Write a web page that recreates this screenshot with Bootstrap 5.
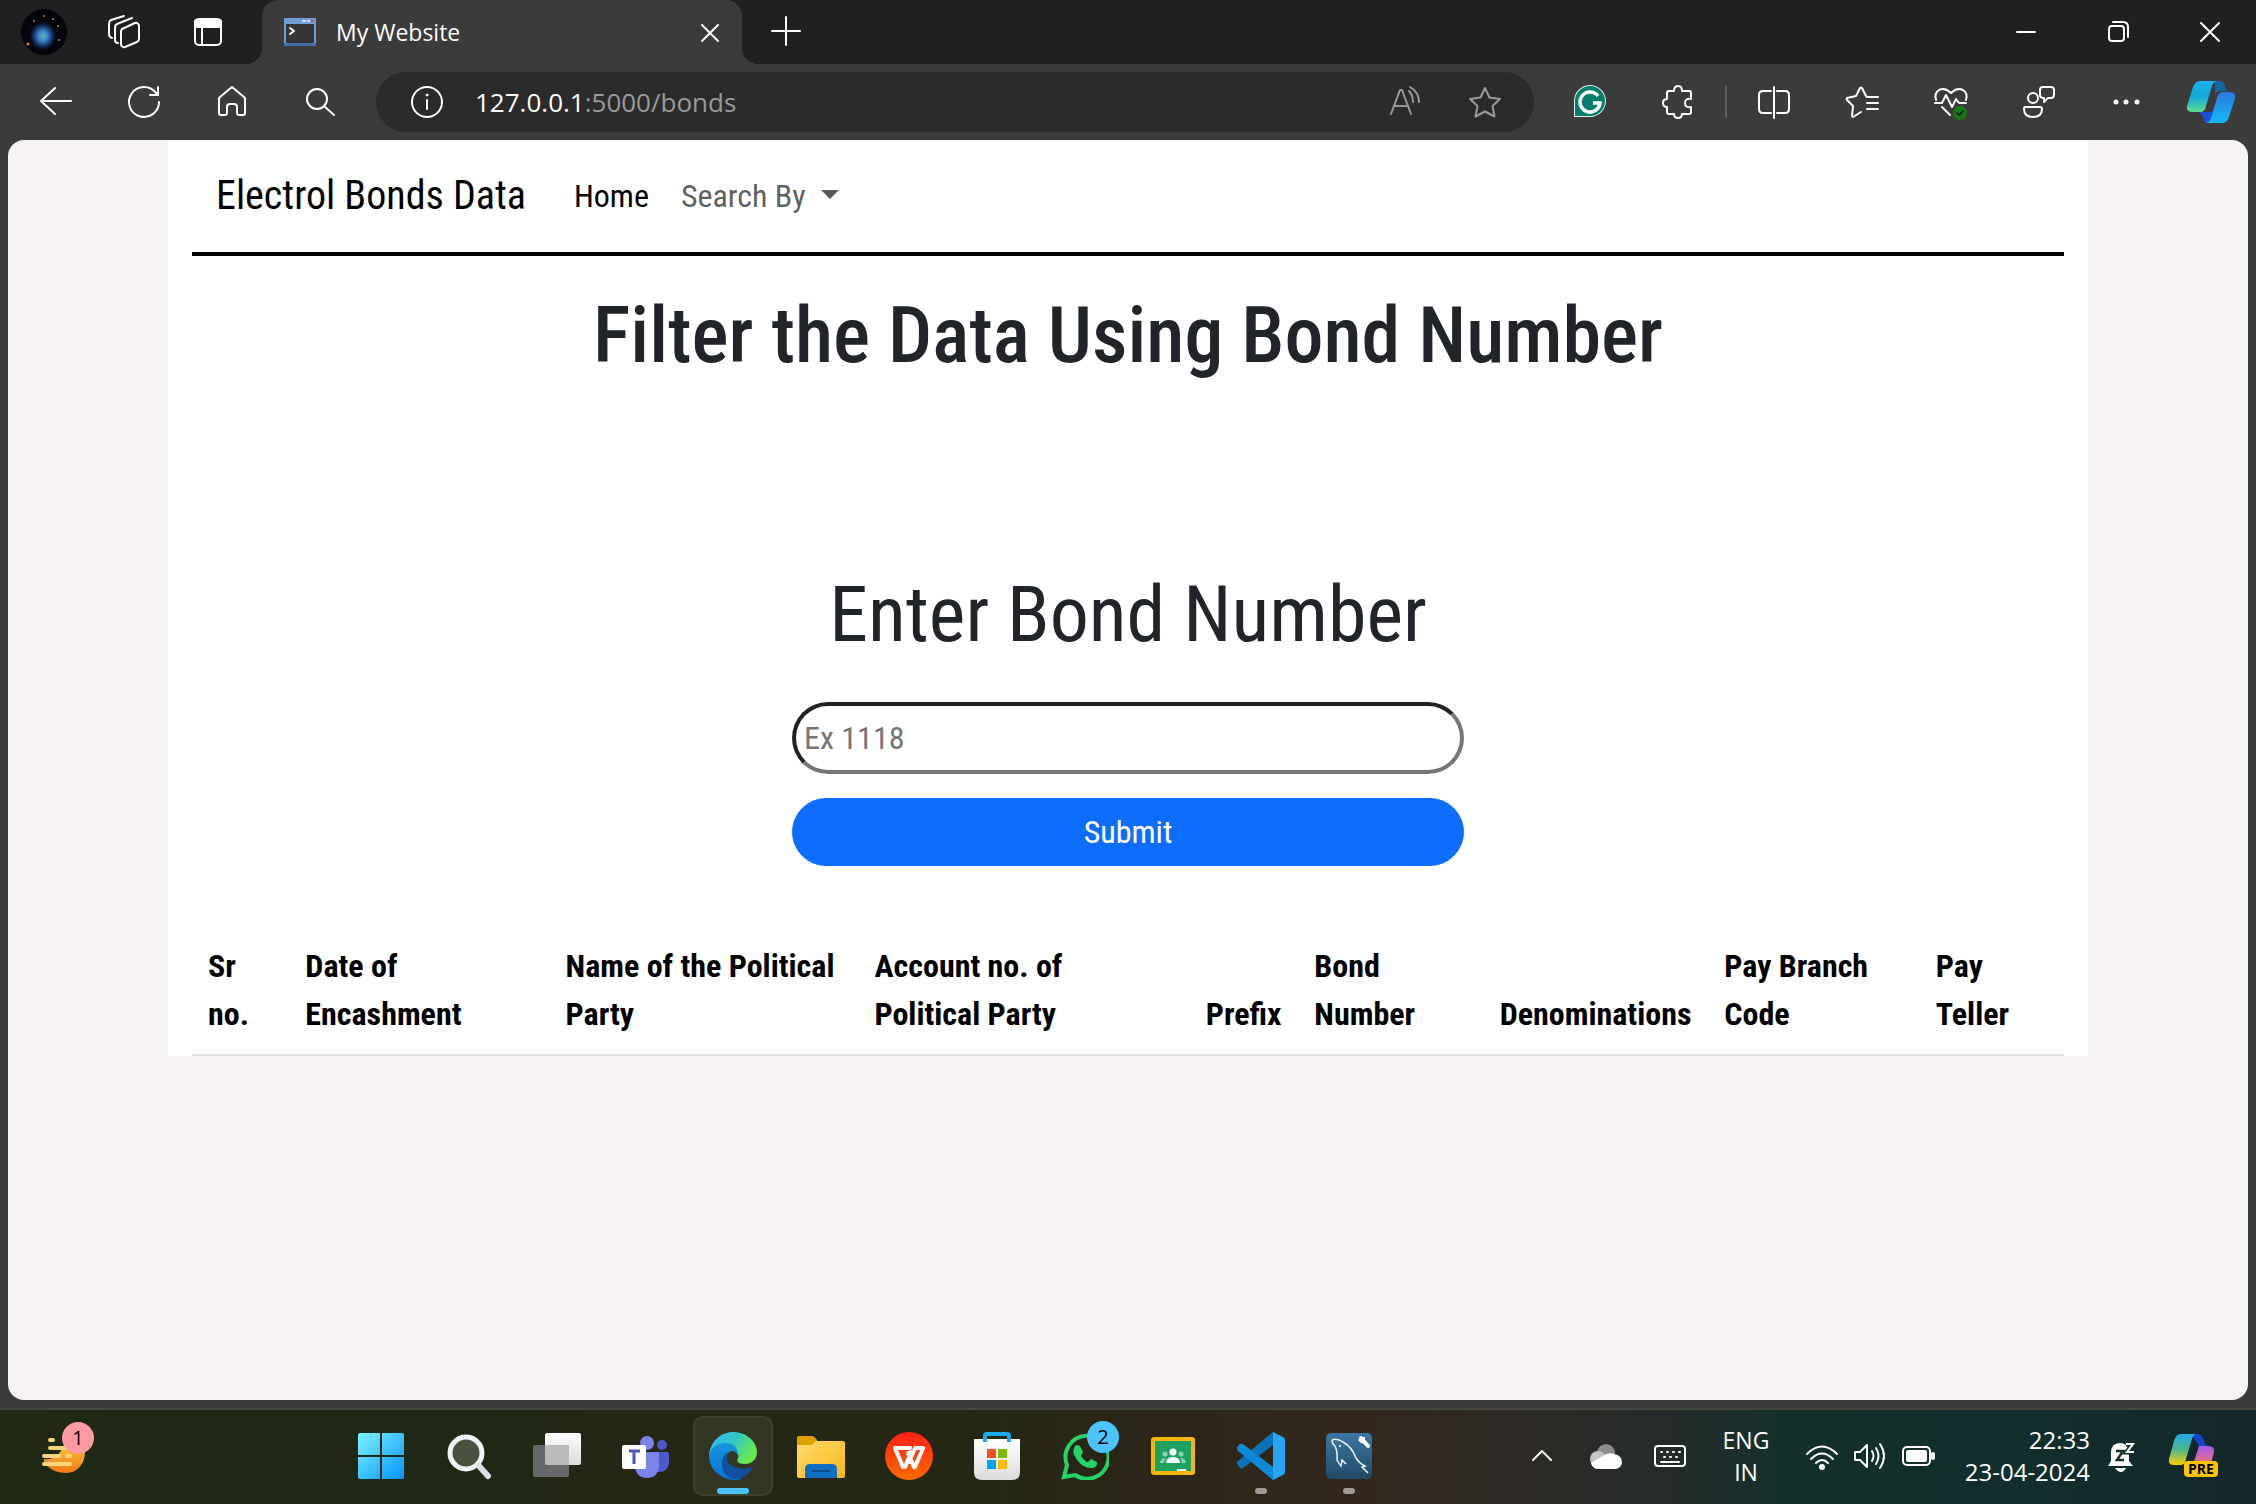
<!DOCTYPE html>
<html lang="en">
<head>
<meta charset="utf-8">
<meta name="viewport" content="width=device-width, initial-scale=1">
<title>My Website</title>
<link href="https://cdn.jsdelivr.net/npm/bootstrap@5.3.0/dist/css/bootstrap.min.css" rel="stylesheet">
<style>
body{background:#3b3b3b;font-family:"Open Sans","Noto Sans",sans-serif;font-size:24px;color:#fff;overflow:hidden}
svg{display:block;flex:none}
.ln{fill:none;stroke:#fff;stroke-width:2;stroke-linecap:round;stroke-linejoin:round}
.dim{stroke:#9a9a9a}
.ib{background:none;border:0;padding:0;color:inherit;display:flex;align-items:center;justify-content:center;flex:none;width:88px;position:relative;text-decoration:none}
.w80{width:80px}.w60{width:60px}.w48{width:48px}.w64{width:64px}.w92{width:92px}.w79{width:79px}.w82{width:82px}.w84{width:84px}.w160{width:160px}
.titlebar{height:64px;background:#202020;padding-left:4px}
.tab{width:480px;background:#3b3b3b;border-radius:16px 16px 0 0;margin-left:10px;padding:0 8px 0 14px;position:relative;font-size:23px;gap:12px}
.tab::before,.tab::after{content:"";position:absolute;bottom:0;width:16px;height:16px}
.tab::before{left:-16px;background:radial-gradient(circle at 0 0,#202020 16px,#3b3b3b 16px)}
.tab::after{right:-16px;background:radial-gradient(circle at 100% 0,#202020 16px,#3b3b3b 16px)}
.toolbar{height:76px;padding:8px 4px 8px 12px}
.address{background:#2b2b2b;border-radius:30px;padding:0 25px 0 27px;margin:0 12px;font-size:26px}
.addr-path{color:#9a9a9a}
.vr-line{width:2px;height:32px;background:#5e5e5e;margin:0 3px}
.viewport-area{background:#f7f3f2;border-radius:16px;margin:0 8px 8px;color:#212529;font-family:"Roboto Condensed",Roboto,sans-serif;font-size:32px;overflow:hidden}
.site{background:#fff;max-width:1920px;padding:0 24px}
.site-nav{border-bottom:4px solid #000;padding:16px 8px}
.site-nav .container-fluid{padding:0 16px}
.site-nav .navbar-brand{font-size:40px;line-height:60px;padding:10px 0;margin-right:32px}
.site-nav .nav-link{padding:16px!important}
.site-title{font-size:78px;line-height:96px;margin:32px 0 0;font-weight:500}
.bond-form{width:672px;max-width:100%;margin:171px auto 60px}
.bond-form label{font-size:78px;line-height:120px;margin-bottom:27px}
.bond-form input{height:72px;border:4px solid;border-color:#212121 #767676 #767676 #212121;border-radius:36px;padding:0 8px;margin-bottom:24px;outline:0}
.bond-form input::placeholder{color:#757575}
.bond-form .btn{height:68px;border-radius:34px;font-size:32px;padding:0}
.bond-table{table-layout:fixed;--bs-table-bg:transparent}
.bond-table th{padding:16px;border-bottom:2px solid #dee2e6;color:#000;line-height:48px;vertical-align:bottom}
.taskbar{height:96px;padding-bottom:2px;border-top:2px solid #43463c;background:linear-gradient(90deg,#1f2914 0,#1f2814 22%,#252714 28%,#242713 42%,#2c2618 52%,#33271c 60%,#2e2a26 67%,#252c2b 74%,#14302b 79%,#122e2d 90%,#13272a 100%)}
.widgets{height:64px;margin:0 229px 0 20px}
.tile{height:80px;width:80px;margin:0 4px;border-radius:10px}
.tile-on{background:rgba(255,255,255,.07);border:2px solid rgba(255,255,255,.05)}
.pill{position:absolute;bottom:2px;width:12px;height:6px;border-radius:3px;background:#a09a94}
.tile-on .pill{width:32px;background:#4cc2ff;bottom:0}
.count{position:absolute;width:32px;height:32px;border-radius:16px;color:#000;font-size:20px;line-height:32px;text-align:center}
.count-pink{background:#ff99a4;top:-2px;left:42px}
.count-blue{background:#4cc2ff;top:5px;left:42px}
.lang{font-size:23px;line-height:32px;width:80px;text-align:center}
.clock{line-height:32px;text-align:right;width:144px}
.copilot-pre{width:84px;height:64px;margin-right:22px}
.pre{position:absolute;left:34px;top:37px;background:#ffc300;color:#000;font-size:14px;line-height:16px;font-weight:700;border-radius:4px;padding:0 4px}
</style>
</head>
<body class="d-flex flex-column vh-100">
<svg width="0" height="0" class="position-absolute"><defs>
<radialGradient id="neb"><stop offset="0" stop-color="#55b9a8"/><stop offset=".3" stop-color="#3f86cf"/><stop offset=".6" stop-color="#173a72"/><stop offset="1" stop-color="#04060c" stop-opacity="0"/></radialGradient>
<linearGradient id="cA" x1="0" y1="0" x2="0" y2="1"><stop offset="0" stop-color="#1bb3f0"/><stop offset=".5" stop-color="#0fa9d8"/><stop offset="1" stop-color="#5fdc90"/></linearGradient>
<linearGradient id="cB" x1="0" y1="0" x2="0" y2="1"><stop offset="0" stop-color="#2a78e0"/><stop offset="1" stop-color="#17b8f5"/></linearGradient>
<linearGradient id="cC" x1="0" y1="0" x2="0" y2="1"><stop offset="0" stop-color="#22a9ee"/><stop offset=".5" stop-color="#4cb58a"/><stop offset="1" stop-color="#ffd000"/></linearGradient>
<linearGradient id="cD" x1="0" y1="0" x2="0" y2="1"><stop offset="0" stop-color="#a35cf0"/><stop offset="1" stop-color="#ff7557"/></linearGradient>
<linearGradient id="win" x1="0" y1="0" x2="1" y2="1"><stop offset="0" stop-color="#7cf3ff"/><stop offset="1" stop-color="#0794ff"/></linearGradient>
<linearGradient id="eTop" x1="0" y1="0" x2="1" y2=".5"><stop offset="0" stop-color="#36b5f5"/><stop offset=".5" stop-color="#2fc6c8"/><stop offset="1" stop-color="#6be84e"/></linearGradient>
<linearGradient id="eL" x1="0" y1="0" x2="0" y2="1"><stop offset="0" stop-color="#1a93dc"/><stop offset="1" stop-color="#0573d4"/></linearGradient>
<linearGradient id="fold" x1="0" y1="0" x2="1" y2="1"><stop offset="0" stop-color="#ffdc70"/><stop offset="1" stop-color="#f9b713"/></linearGradient>
<linearGradient id="wps" x1="0" y1="0" x2="0" y2="1"><stop offset="0" stop-color="#ff1f1a"/><stop offset="1" stop-color="#ff6a00"/></linearGradient>
<linearGradient id="wh" x1="0" y1="0" x2="0" y2="1"><stop offset="0" stop-color="#fff"/><stop offset="1" stop-color="#dcdcdc"/></linearGradient>
<linearGradient id="my" x1="0" y1="0" x2="0" y2="1"><stop offset="0" stop-color="#3b78a5"/><stop offset="1" stop-color="#204a66"/></linearGradient>
<linearGradient id="food" x1="0" y1="0" x2="0" y2="1"><stop offset="0" stop-color="#f8c83c"/><stop offset="1" stop-color="#f07a14"/></linearGradient>
</defs></svg>

<header class="titlebar d-flex">
  <button class="ib w80" aria-label="Profile"><svg width="48" height="48"><circle cx="24" cy="24" r="23" fill="#04060c"/><ellipse cx="23" cy="28" rx="15" ry="16" fill="url(#neb)"/><g fill="#c8794a"><circle cx="14" cy="13" r="1"/><circle cx="33" cy="11" r="1"/><circle cx="38" cy="18" r="1"/><circle cx="8" cy="36" r="1.5"/><circle cx="24" cy="8" r="1"/><circle cx="39" cy="32" r="1"/></g></svg></button>
  <button class="ib w80" aria-label="Workspaces"><svg width="48" height="48" class="ln"><path d="M22 21l13-6a3 3 0 0 1 4 3v13q0 2-2 3l-12 5a3 3 0 0 1-4-3V24q0-2 1-3zM18 35q-3 0-3-3V20q0-3 2-4l15-6M12 30q-3-1-3-4V16q0-3 2-4l13-4"/></svg></button>
  <button class="ib" aria-label="Tab actions"><svg width="48" height="48" class="ln"><rect x="11" y="12" width="26" height="25" rx="4"/><path d="M11 13q1-2 4-2h18q3 0 4 2v6H11z" fill="#fff"/><path d="M18 19v18"/></svg></button>
  <div class="tab d-flex align-items-center">
    <svg width="48" height="48"><path d="M8 10h32v28H8z" fill="#6f9edb"/><path d="M8 35h32v3H8z" fill="#466fae"/><path d="M10 16h28v19H10z" fill="#353535"/><path d="M26 12h4v2h-4zM31 12h3v2h-3z" fill="#d6dfec"/><path d="M35 12h3v2h-3z" fill="#e5533f"/><path d="M14 20l4 3-4 3" class="ln"/></svg>
    <span>My Website</span>
    <button class="ib w48 ms-auto" aria-label="Close tab"><svg width="48" height="48" class="ln"><path d="M16 17l16 16M32 17L16 33"/></svg></button>
  </div>
  <button class="ib" aria-label="New tab"><svg width="48" height="48" class="ln"><path d="M10 23h28M24 9v28"/></svg></button>
  <div class="ms-auto d-flex">
    <button class="ib w92" aria-label="Minimize"><svg width="48" height="48" class="ln"><path d="M15 24h18"/></svg></button>
    <button class="ib w92" aria-label="Restore"><svg width="48" height="48" class="ln"><rect x="15" y="18" width="15" height="15" rx="3"/><path d="M19 14h10q5 0 5 5v10"/></svg></button>
    <button class="ib w92" aria-label="Close"><svg width="48" height="48" class="ln"><path d="M15 15l18 18M33 15L15 33"/></svg></button>
  </div>
</header>

<div class="toolbar d-flex">
  <button class="ib" aria-label="Back"><svg width="48" height="48" class="ln"><path d="M23 10L9 23l14 13M9 23h30"/></svg></button>
  <button class="ib" aria-label="Refresh"><svg width="48" height="48" class="ln"><path d="M39 24a15 15 0 1 1-3-9l2 2M38 9v8h-8"/></svg></button>
  <button class="ib" aria-label="Home"><svg width="48" height="48" class="ln"><path d="M24 9l12 10q1 1 1 2v14q0 2-2 2h-4q-2 0-2-2v-6q0-3-3-3h-4q-3 0-3 3v6q0 2-2 2h-4q-2 0-2-2V21q0-1 1-2z"/></svg></button>
  <button class="ib" aria-label="Search"><svg width="48" height="48" class="ln"><circle cx="21" cy="21" r="10"/><path d="M28 28l10 9"/></svg></button>
  <div class="address d-flex align-items-center flex-grow-1">
    <svg width="48" height="48" class="ln"><circle cx="24" cy="24" r="15"/><path d="M24 22v9"/><circle cx="24" cy="17" r="1" fill="#fff" stroke-width="1"/></svg>
    <span class="ms-4">127.0.0.1<span class="addr-path">:5000/bonds</span></span>
    <div class="d-flex ms-auto">
      <button class="ib w79" aria-label="Read aloud"><svg width="48" height="48" class="ln dim"><path d="M9 36l9-24h2l9 24M13 28h12M27 13q4 4 4 11M28 9q9 5 9 15"/></svg></button>
      <button class="ib w48 ms-3" aria-label="Favorite"><svg width="48" height="48" class="ln dim"><path d="M24 10l4.500 9.500 10.500 1.500-7.500 7 2 10.500-9.500-5-9.500 5 2-10.500-7.500-7 10.500-1.500z"/></svg></button>
    </div>
  </div>
  <button class="ib" aria-label="Grammarly"><svg width="48" height="48"><path d="M8 39V24a16 16 0 1 1 16 15z" fill="#d9f3ee"/><path d="M9 38V24a15 15 0 1 1 15 14z" fill="#087d6c"/><path d="M32 18a10 10 0 1 0 2 7h-7" fill="none" stroke="#fff" stroke-width="3.500"/></svg></button>
  <button class="ib" aria-label="Extensions"><svg width="48" height="48" class="ln"><path d="M15 13h5q0-5 4-5t4 5h7q2 0 2 2v6q-6-1-6 4t6 4v5q0 2-2 2h-7q0 4-4 4t-4-4h-5q-2 0-2-2v-5q-4 0-4-4t4-4v-6q0-2 2-2z"/></svg></button>
  <span class="vr-line align-self-center"></span>
  <button class="ib" aria-label="Split screen"><svg width="48" height="48" class="ln"><path d="M21 13h-8q-4 0-4 4v14q0 4 4 4h8M27 13h8q4 0 4 4v14q0 4-4 4h-8M24 9v31"/></svg></button>
  <button class="ib" aria-label="Favorites"><svg width="48" height="48" class="ln"><path d="M29 19l-1-1-4-8q-1-1-2 0l-4 8-9 2q-1 1 0 2l6 6-1 10q0 1 1 1l8-5M30 19h10M29 25h11M29 31h11"/></svg></button>
  <button class="ib" aria-label="Browser essentials"><svg width="48" height="48" class="ln"><path d="M10 22q-2-7 3-10 6-3 12 3 6-6 12-3 5 3 3 10M9 25h7l4-8 6 12 4-8 3 4h7M16 29l8 8"/><circle cx="34" cy="35" r="7" fill="#107c10" stroke="none"/><path d="M31 35l2 2 4-4" stroke="#222"/></svg></button>
  <button class="ib" aria-label="Feedback"><svg width="48" height="48" class="ln"><circle cx="19" cy="20" r="5"/><path d="M11 29h15q2 0 2 2 0 8-9 8t-9-8q0-2 1-2zM29 9h8q3 0 3 3v5q0 3-3 3h-3l-4 4v-4q-4 0-4-3v-5q0-3 3-3z"/></svg></button>
  <button class="ib" aria-label="More"><svg width="48" height="48" fill="#fff"><circle cx="14" cy="24" r="2.500"/><circle cx="24" cy="24" r="2.500"/><circle cx="35" cy="24" r="2.500"/></svg></button>
  <button class="ib w82" aria-label="Copilot"><svg width="48" height="48"><path d="M28 3h4q5 0 6 5 1 5 4 5h-9q-4 0-5 4z" fill="#0d6ba0"/><path d="M21 45q-4 0-5-5-1-6-6-6h12q5 0 5-5l4-6-6 22z" fill="#1c50dc"/><path d="M13 3h17q-4 1-5 5l-6 20q-1 6-6 6H5q-6 0-5-6L6 9q2-6 7-6z" fill="url(#cA)"/><path d="M35 45H19q4-1 5-5l6-20q1-6 6-6h7q6 0 5 6l-6 19q-2 6-7 6z" fill="url(#cB)"/></svg></button>
</div>

<main class="viewport-area flex-grow-1">
  <div class="site mx-auto">
    <nav class="site-nav navbar navbar-expand navbar-light">
      <div class="container-fluid">
        <a class="navbar-brand text-black" href="#">Electrol Bonds Data</a>
        <ul class="navbar-nav me-auto">
          <li class="nav-item"><a class="nav-link text-black" href="#">Home</a></li>
          <li class="nav-item dropdown"><a class="nav-link dropdown-toggle" href="#" role="button" data-bs-toggle="dropdown">Search By </a></li>
        </ul>
      </div>
    </nav>
    <h1 class="site-title text-center">Filter the Data Using Bond Number</h1>
    <form class="bond-form d-flex flex-column">
      <label for="bond" class="text-center">Enter Bond Number</label>
      <input id="bond" type="text" placeholder="Ex 1118">
      <button type="button" class="btn btn-primary">Submit</button>
    </form>
    <table class="bond-table table mb-0">
      <colgroup><col style="width:5.2%"><col style="width:13.9%"><col style="width:16.5%"><col style="width:17.7%"><col style="width:5.8%"><col style="width:9.9%"><col style="width:12%"><col style="width:11.3%"><col style="width:7.7%"></colgroup>
      <thead><tr>
        <th scope="col">Sr no.</th><th scope="col">Date of Encashment</th><th scope="col">Name of the Political Party</th><th scope="col">Account no. of Political Party</th><th scope="col">Prefix</th><th scope="col">Bond Number</th><th scope="col">Denominations</th><th scope="col">Pay Branch Code</th><th scope="col">Pay Teller</th>
      </tr></thead>
    </table>
  </div>
</main>

<footer class="taskbar d-flex align-items-center">
  <button class="ib widgets" aria-label="Widgets"><svg width="56" height="56"><path d="M8 31q14 2 21-16l18 0q4 9 0 19-6 11-16 11Q14 45 8 33z" fill="url(#food)"/><g stroke="#f6d67c" stroke-width="4" stroke-linecap="round"><path d="M14 12h3M14 20h20M8 28h15M31 28h3M8 36h26"/></g></svg><span class="count count-pink">1</span></button>
  <button class="ib tile" aria-label="Start"><svg width="48" height="48" fill="url(#win)"><path d="M1 3q0-2 2-2h20v22H1zM25 1h20q2 0 2 2v20H25zM1 25h22v22H3q-2 0-2-2zM25 25h22v20q0 2-2 2H25z"/></svg></button>
  <button class="ib tile" aria-label="Search"><svg width="48" height="48"><circle cx="21" cy="21" r="16" fill="#4b513f" stroke="#f1f3f6" stroke-width="5"/><path d="M34 34l9 10" stroke="#dcdfe6" stroke-width="6" stroke-linecap="round"/></svg></button>
  <button class="ib tile" aria-label="Task view"><svg width="48" height="48"><rect x="12" y="1" width="36" height="32" rx="2" fill="url(#wh)"/><rect y="13" width="36" height="32" rx="2" fill="#66686a"/><path d="M12 13h24v20H14q-2 0-2-2z" fill="#bbb"/></svg></button>
  <button class="ib tile" aria-label="Teams"><svg width="48" height="48"><circle cx="41" cy="13" r="5" fill="#5059c9"/><path d="M34 20h12q2 0 2 2v9q-1 9-10 9h-4z" fill="#5059c9"/><circle cx="26" cy="11" r="7" fill="#7b83eb"/><path d="M15 20h21q2 0 2 2v12q-1 12-12 12T14 34z" fill="#7b83eb"/><rect x="1" y="13" width="24" height="24" rx="2" fill="#fff"/><path d="M8 19h11M13 19v13" stroke="#4b53bc" stroke-width="3"/></svg></button>
  <button class="ib tile tile-on" aria-label="Edge"><svg width="48" height="48"><path d="M0 24C1 9 12 0 24 0c14 0 24 10 24 20 0 8-6 12-12 12-7 0-9-3-7-6 2-4-2-8-8-9Q8 14 0 24z" fill="url(#eTop)"/><path d="M0 24q3-12 15-13 14 0 14 13-4-8-10-3-9 12 9 24 6 2 4 2Q22 50 12 44 0 37 0 24z" fill="url(#eL)"/><path d="M19 20q-4 14 10 16 7 2 14-1 2 0 0 2-8 11-19 10Q12 43 13 30q1-7 6-10z" fill="#10509f"/></svg><span class="pill"></span></button>
  <button class="ib tile" aria-label="File Explorer"><svg width="48" height="48"><path d="M0 6q0-2 2-2h13q2 0 5 4l2 5H0z" fill="#e0a000"/><path d="M0 13h15l4-4h27q2 0 2 2v33q0 2-2 2H2q-2 0-2-2z" fill="url(#fold)"/><path d="M8 46V37q0-5 5-5h22q5 0 5 5v9z" fill="#0f6fc5"/><path d="M15 39h18" stroke="#0a4a8c" stroke-width="2"/></svg></button>
  <button class="ib tile" aria-label="WPS Office"><svg width="48" height="48"><circle cx="24" cy="24" r="24" fill="url(#wps)"/><path d="M25 16H10l8 19h2l6-15M23 21l6 14h1l8-19h-8l-6 14" fill="none" stroke="#fff" stroke-width="4" stroke-linejoin="round" stroke-linecap="round"/></svg></button>
  <button class="ib tile" aria-label="Microsoft Store"><svg width="48" height="48"><path d="M1 7h46v33q0 8-8 8H9q-8 0-8-8z" fill="url(#wh)"/><path d="M12 10V4q0-2 2-2h20q2 0 2 2v6" fill="none" stroke="#1cabea" stroke-width="4"/><path d="M14 17h9v9h-9z" fill="#f25022"/><path d="M25 17h9v9h-9z" fill="#7fba00"/><path d="M14 28h9v9h-9z" fill="#00a4ef"/><path d="M25 28h9v9h-9z" fill="#ffb900"/></svg></button>
  <button class="ib tile" aria-label="WhatsApp"><svg width="48" height="48"><path d="M3 45l3-12A21.500 21.500 0 1 1 14 43z" fill="none" stroke="#25d366" stroke-width="4"/><path d="M14 14q4-3 6 2l2 4-2 4q3 5 7 6l3-3 6 3q1 4-4 6-9 1-16-8-6-8-2-14z" fill="#25d366"/></svg><span class="count count-blue">2</span></button>
  <button class="ib tile" aria-label="Classroom"><svg width="48" height="48"><rect x="2" y="5" width="44" height="38" rx="3" fill="#f5b70f"/><path d="M6 9h36v30H6z" fill="#1ba260"/><circle cx="24" cy="20" r="3.500" fill="#fff"/><path d="M17 31q0-6 7-6t7 6z" fill="#fff"/><g fill="#8bd1af"><circle cx="16" cy="22" r="2.500"/><circle cx="32" cy="22" r="2.500"/><path d="M11 31q0-5 6-5-2 2-2 5zM37 31q0-5-6-5 2 2 2 5z"/></g><path d="M28 37h9v2h-9z" fill="#fff"/></svg></button>
  <button class="ib tile" aria-label="VS Code"><svg width="48" height="48"><path d="M36 0v13L6 36q-2 1-3 0l-3-4q-1-1 0-2z" fill="#0a72b8"/><path d="M36 48V35L6 12q-2-1-3 0l-3 3q-1 2 0 3z" fill="#0b8ad8"/><path d="M36 0l10 5q2 1 2 3v32q0 2-2 3l-10 5z" fill="#28a5f0"/></svg><span class="pill"></span></button>
  <button class="ib tile" aria-label="MySQL Workbench"><svg width="48" height="48"><rect x="1" y="1" width="46" height="46" rx="5" fill="url(#my)"/><path d="M7 8q5-2 11 2 9 5 13 16 3 5 9 8l-3 1 6 6M7 8q0 4 3 6 3 7 2 14 2 4 4 6l1-6 4 4" fill="none" stroke="#eaf3fa" stroke-width="1.500"/><circle cx="15" cy="14" r="1" fill="#fff"/><path d="M36 6l7 8" stroke="#fff" stroke-width="4" stroke-linecap="round"/><path d="M34 7q1 4 5 3V5" stroke="#fff" stroke-width="2" fill="none"/></svg><span class="pill"></span></button>
  <div class="ms-auto d-flex align-items-center">
    <button class="ib w64" aria-label="Hidden icons"><svg width="48" height="48" class="ln"><path d="M15 28l9-9 9 9"/></svg></button>
    <button class="ib w64" aria-label="OneDrive"><svg width="48" height="48"><circle cx="24" cy="21" r="9" fill="#8c8c8c"/><circle cx="16" cy="27" r="8" fill="#c4c4c4"/><path d="M9 31q6-4 12-7 5-4 11-2 8 1 8 9-1 5-6 6H15q-5-1-6-6z" fill="#fff"/></svg></button>
    <button class="ib w64" aria-label="Touch keyboard"><svg width="48" height="48" class="ln"><rect x="9" y="14" width="30" height="20" rx="3"/><path d="M15 20h1M21 20h1M27 20h1M33 20h1M18 25h1M24 25h1M30 25h1M15 30h18"/></svg></button>
    <div class="lang ms-1">ENG<br>IN</div>
    <button class="ib w160 ps-2" aria-label="Network, volume and battery">
      <svg width="48" height="48" class="ln"><path d="M9 22q15-15 30 0M13 27q11-11 22 0M18 31q6-6 12 0"/><circle cx="24" cy="35" r="2" fill="#fff"/></svg>
      <svg width="48" height="48" class="ln"><path d="M9 20h5l7-7v22l-7-7H9zM26 19q3 5 0 10M30 16q5 8 0 16M34 12q8 12 0 24"/></svg>
      <svg width="48" height="48" class="ln"><rect x="9" y="15" width="27" height="18" rx="4"/><rect x="13" y="19" width="19" height="10" rx="1" fill="#fff"/><path d="M39 22v4" stroke-width="4"/></svg>
    </button>
    <div class="clock">22:33<br>23-04-2024</div>
    <button class="ib w60" aria-label="Notifications"><svg width="48" height="48"><path d="M12 34l3-5v-8q0-10 9-10t9 10v8l4 5zM19 36h11q-2 4-5 4t-6-4z" fill="#fff"/><path d="M20 19h7l-6 9h7" stroke="#14302c" stroke-width="2.500" fill="none"/><path d="M30 12h7l-6 8h7" stroke="#14302c" stroke-width="5" fill="none"/><path d="M30 12h7l-6 8h7" stroke="#fff" stroke-width="2" fill="none"/></svg></button>
    <button class="ib copilot-pre" aria-label="Copilot preview"><svg width="48" height="48"><path d="M23 2h7q5 1 6 7 1 4 4 5h-9z" fill="#1444c8"/><path d="M13 2h15q-3 1-4 5l-6 20q-1 6-6 6H6q-6 0-5-6L6 9q2-7 7-7z" fill="url(#cC)"/><path d="M31 14h9q7 0 6 6l-4 16H24z" fill="url(#cD)"/></svg><span class="pre">PRE</span></button>
  </div>
</footer>
<script src="https://cdn.jsdelivr.net/npm/bootstrap@5.3.0/dist/js/bootstrap.bundle.min.js"></script>
</body>
</html>
